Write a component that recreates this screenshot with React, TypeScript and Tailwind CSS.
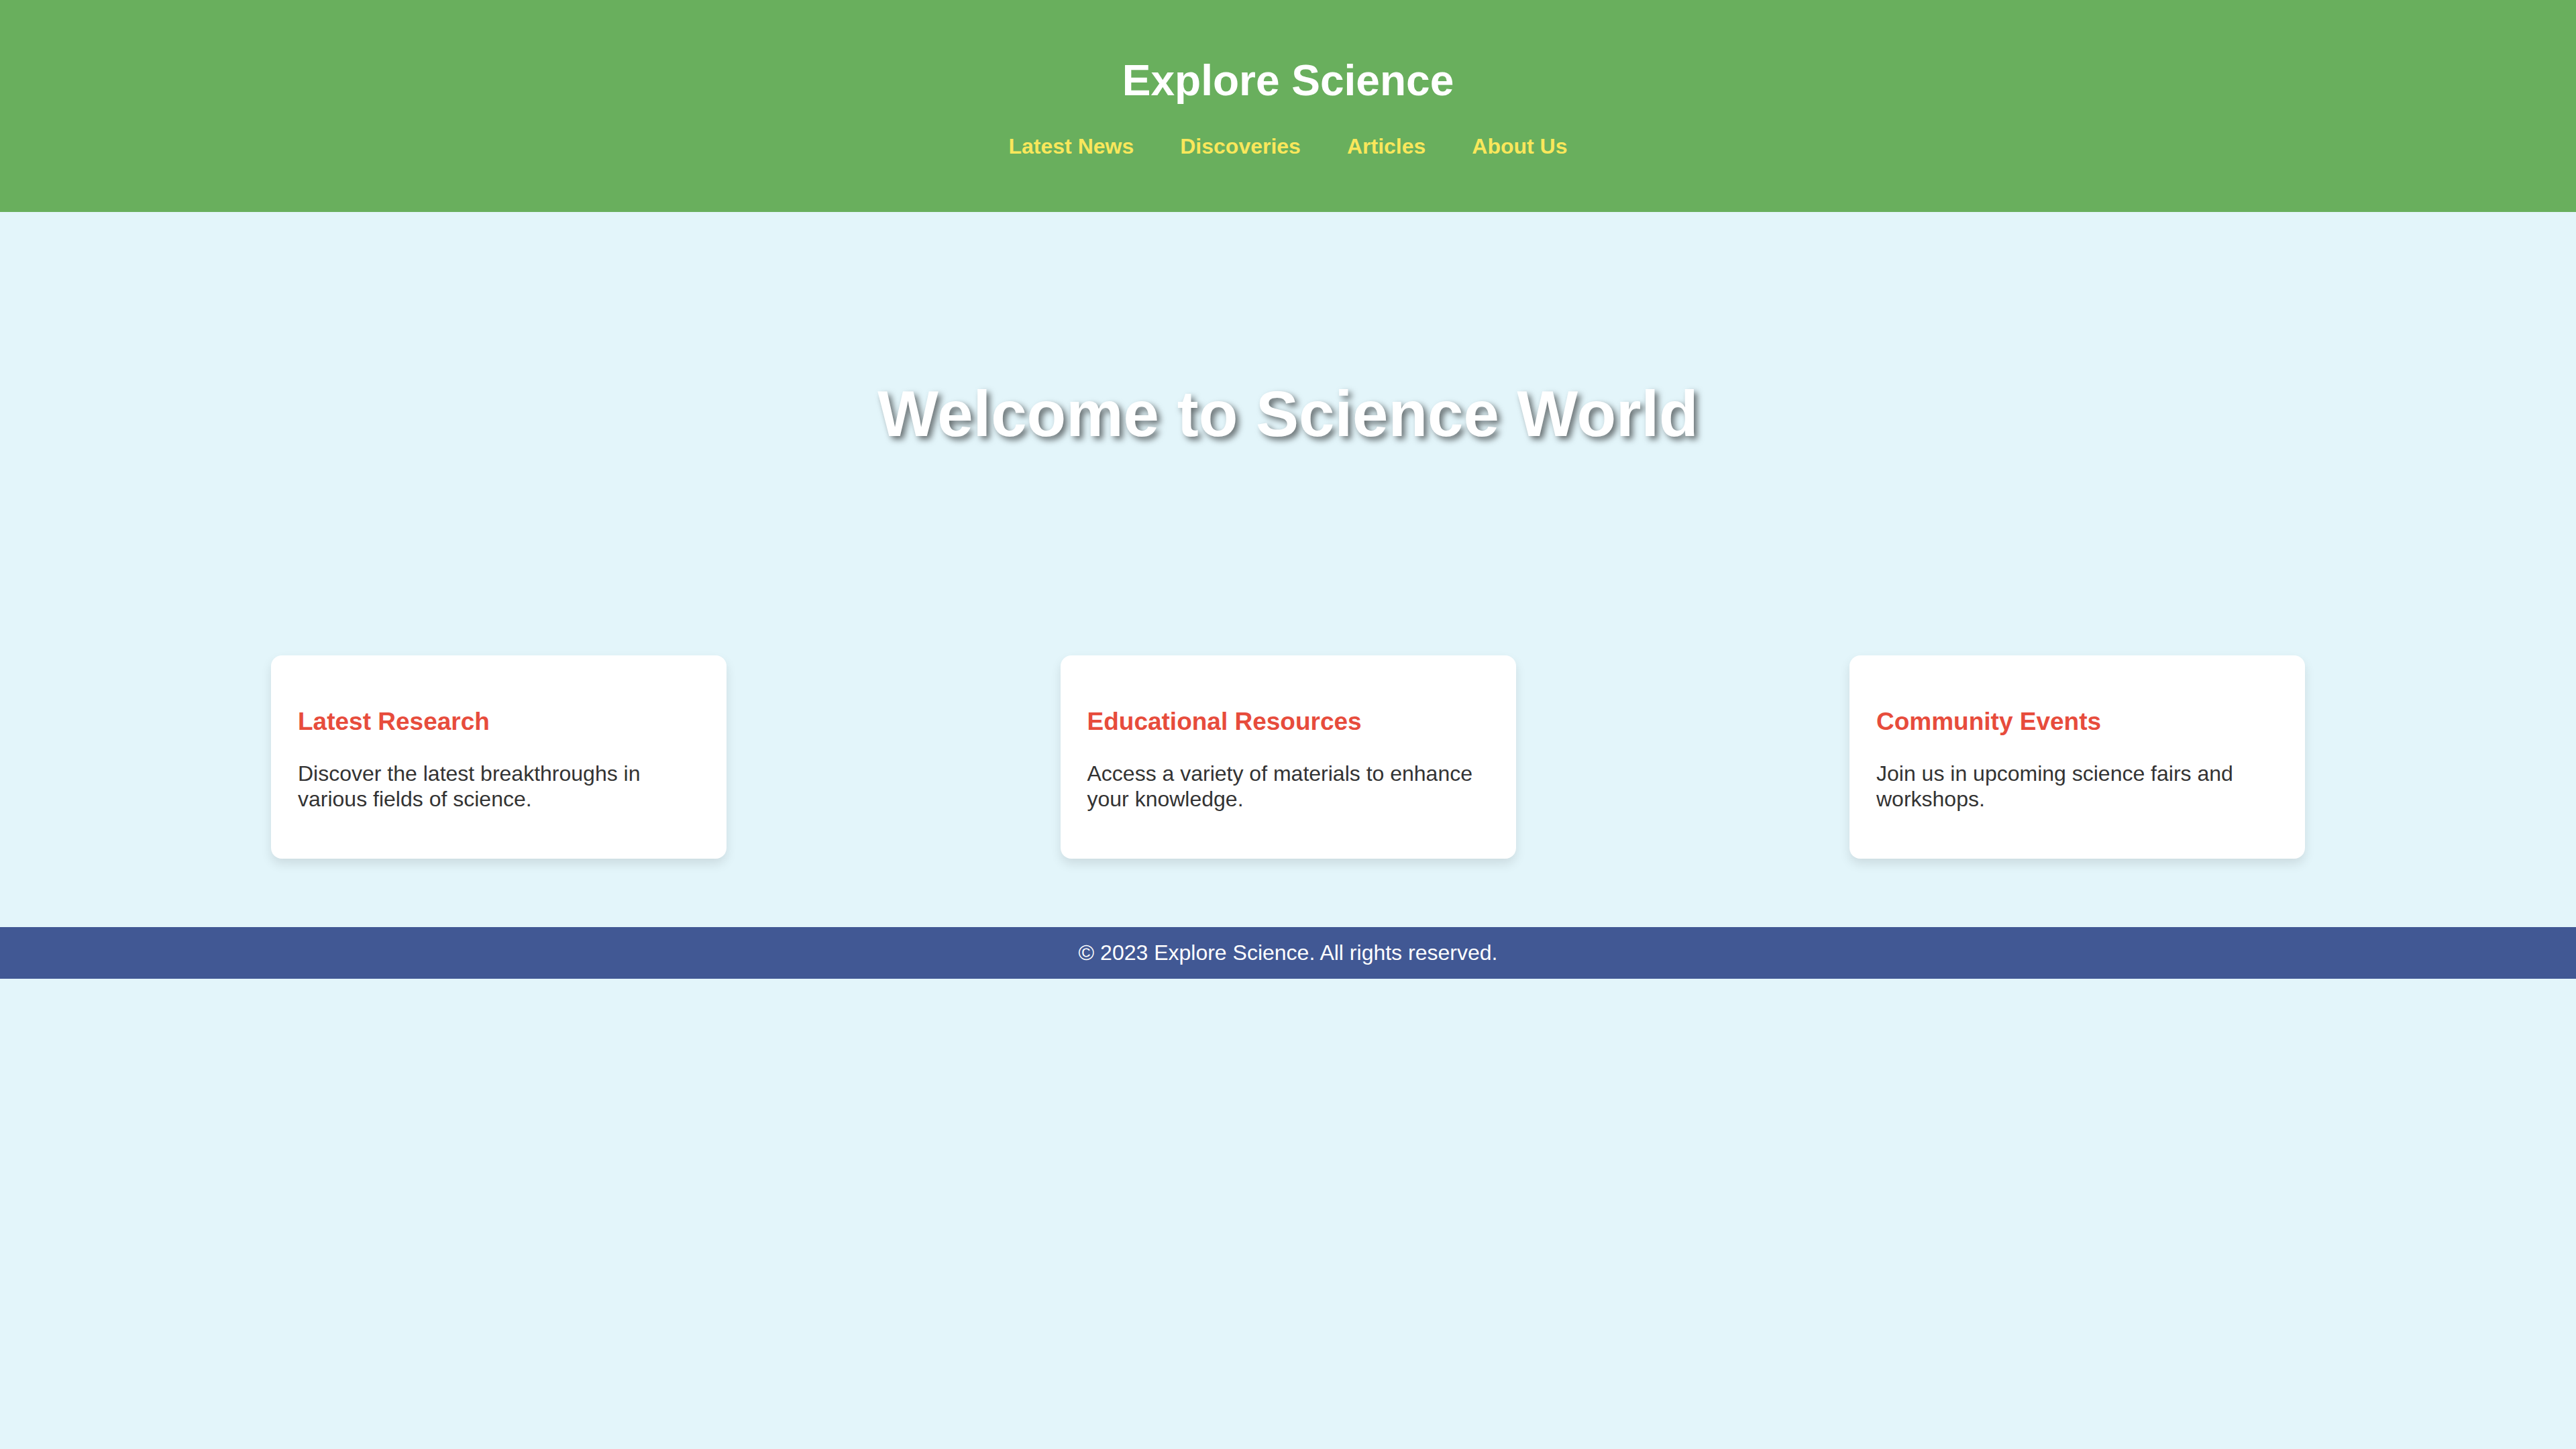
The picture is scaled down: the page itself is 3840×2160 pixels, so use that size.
import React from "react";

const navLinks = ["Latest News", "Discoveries", "Articles", "About Us"];

const cards = [
  {
    title: "Latest Research",
    text: "Discover the latest breakthroughs in various fields of science.",
  },
  {
    title: "Educational Resources",
    text: "Access a variety of materials to enhance your knowledge.",
  },
  {
    title: "Community Events",
    text: "Join us in upcoming science fairs and workshops.",
  },
];

const App: React.FC = () => {
  return (
    <div className="min-h-screen bg-[#e3f5fa] font-['Liberation_Sans',Arial,sans-serif] text-[#333]">
      {/* Header */}
      <header className="bg-[#69af5d] pt-[83px] pb-[79px] text-center">
        <h1 className="text-[64px] leading-[74px] font-bold text-white">
          Explore Science
        </h1>
        <nav className="mt-[43px] flex justify-center gap-[69px]">
          {navLinks.map((link) => (
            <a
              key={link}
              href="#"
              className="text-[32px] leading-[37px] font-bold text-[#f9e75b]"
            >
              {link}
            </a>
          ))}
        </nav>
      </header>

      {/* Hero */}
      <section className="pt-[246px] pb-[265px] text-center">
        <h2 className="text-[96px] leading-[110px] font-bold text-white [text-shadow:5px_5px_10px_rgba(0,0,0,0.55)]">
          Welcome to Science World
        </h2>
      </section>

      {/* Cards */}
      <section className="flex justify-between px-[404px] pt-[40px] pb-[102px]">
        {cards.map((card) => (
          <div
            key={card.title}
            className="w-[679px] rounded-[16px] bg-white p-[40px] shadow-[0_8px_16px_rgba(0,0,0,0.1)]"
          >
            <h3 className="mt-[37px] text-[37px] leading-[43px] font-bold text-[#e74c3c]">
              {card.title}
            </h3>
            <p className="mt-[37px] mb-[30px] text-[32px] leading-[38px]">
              {card.text}
            </p>
          </div>
        ))}
      </section>

      {/* Footer */}
      <footer className="bg-[#415894] py-[20px] text-center text-[32px] leading-[37px] text-white">
        © 2023 Explore Science. All rights reserved.
      </footer>
    </div>
  );
};

export default App;
